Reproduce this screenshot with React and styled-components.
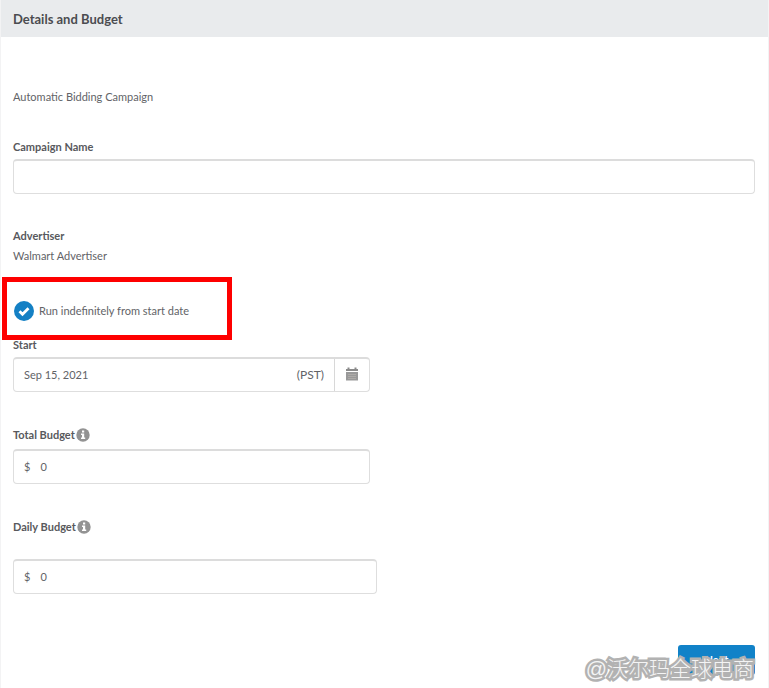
import React from "react";
import styled, { createGlobalStyle } from "styled-components";

const GlobalStyle = createGlobalStyle`
  *, *::before, *::after { box-sizing: border-box; }
  body {
    margin: 0;
    background: #fff;
    color: #626367;
    font-family: Lato, "Noto Sans CJK SC", sans-serif;
    font-size: 11px;
    line-height: 16px;
  }
  input, button { font: inherit; color: inherit; }
`;

const Panel = styled.main`
  border: solid #f3f3f4;
  border-width: 0 1px;
  min-height: 100vh;
`;

const Header = styled.header`
  padding: 9px 12px 8px;
  background: #e9ebed;
`;

const Title = styled.h1`
  margin: 0;
  font-size: 13px;
  line-height: 20px;
  font-weight: 700;
  color: #4b4c50;
`;

const Form = styled.form`
  display: flex;
  flex-direction: column;
  align-items: flex-start;
  padding: 52px 13px 0 12px;
`;

const Note = styled.p`
  margin: 0;
`;

const Field = styled.div`
  display: flex;
  flex-direction: column;
  gap: ${(p) => p.$gap || 4}px;
  width: 100%;
  max-width: ${(p) => p.$max || "none"};
  margin-top: ${(p) => p.$top || 0}px;
`;

const LabelRow = styled.div`
  display: flex;
  align-items: center;
  gap: 1px;
`;

const Label = styled.label`
  font-weight: 700;
  color: #58595d;
`;

const Box = styled.div`
  display: flex;
  align-items: stretch;
  height: 35px;
  border: 1px solid #dedede;
  border-top: 2px solid #dcdcdc;
  border-radius: 4px;
  background: #fff;
`;

const Input = styled.input`
  flex: 1;
  min-width: 0;
  border: 0;
  outline: 0;
  padding: 0 10px;
  background: transparent;
`;

const Prefix = styled.span`
  align-self: center;
  padding-left: 10px;
`;

const Suffix = styled.span`
  align-self: center;
  padding-right: 10px;
  font-size: 12px;
`;

const CalendarButton = styled.button`
  display: grid;
  place-items: center;
  width: 35px;
  padding: 0 0 2px;
  border: 0;
  border-left: 1px solid #d8d8d8;
  background: transparent;
`;

const Highlight = styled.div`
  display: flex;
  align-items: center;
  width: 230px;
  height: 63px;
  margin: 13px 0 0 -11px;
  padding: 4px 0 0 7px;
  border: 5px solid #fe0000;
`;

const CheckLabel = styled.label`
  display: flex;
  align-items: center;
  gap: 5px;
`;

const Check = styled.input`
  appearance: none;
  position: absolute;
  width: 20px;
  height: 20px;
  margin: 0;
`;

const InfoButton = styled.button`
  display: flex;
  padding: 0;
  border: 0;
  background: transparent;
`;

const Footer = styled.footer`
  position: relative;
  display: flex;
  justify-content: flex-end;
  width: 100%;
  margin-top: 51px;
`;

const NextButton = styled.button`
  width: 77px;
  height: 30px;
  padding: 0;
  border: 0;
  border-radius: 3px;
  background: #1182c8;
  color: #fff;
  font-weight: 700;
`;

const Watermark = styled.span`
  position: absolute;
  right: 1px;
  top: 9px;
  font-family: "Liberation Sans", "Noto Sans CJK SC", sans-serif;
  font-size: 21px;
  font-weight: 300;
  line-height: 30px;
  white-space: nowrap;
  color: #f4f4f4;
  paint-order: stroke fill;
  -webkit-text-stroke: 5px #b2b2b2;
  pointer-events: none;
`;

function CheckIcon() {
  return (
    <svg width="20" height="20" viewBox="0 0 20 20" aria-hidden="true">
      <circle cx="10" cy="10" r="10" fill="#1480c4" />
      <path d="M5.5 10.2l3 3 6-6" fill="none" stroke="#fff" strokeWidth="2.8" />
    </svg>
  );
}

function InfoIcon() {
  return (
    <svg width="14" height="14" viewBox="0 0 14 14" aria-hidden="true">
      <circle cx="7" cy="7" r="6.7" fill="#939393" />
      <path d="M6 2.5h2.2v2H6zM5 5.6h3.2v3.8h1V11H5V9.4h1V7.1H5z" fill="#fff" />
    </svg>
  );
}

function CalendarIcon() {
  return (
    <svg width="14" height="14" viewBox="0 0 14 14" aria-hidden="true">
      <path d="M1 2h1.5V.5h2V2h5V.5h2V2H13v2H1z" fill="#8b8b8b" />
      <path d="M1 5h12v8.5H1z" fill="#999" />
      <path d="M3 7.5h8M3 9.5h8M3 11.5h8" stroke="#b4b0ac" strokeWidth=".8" />
    </svg>
  );
}

function BudgetField({ id, label, gap, max, top }) {
  return (
    <Field $gap={gap} $max={max} $top={top}>
      <LabelRow>
        <Label htmlFor={id}>{label}</Label>
        <InfoButton type="button" aria-label={`About ${label}`}>
          <InfoIcon />
        </InfoButton>
      </LabelRow>
      <Box>
        <Prefix>$</Prefix>
        <Input id={id} defaultValue="0" />
      </Box>
    </Field>
  );
}

export default function App() {
  return (
    <>
      <GlobalStyle />
      <Panel>
        <Header>
          <Title>Details and Budget</Title>
        </Header>
        <Form>
          <Note>Automatic Bidding Campaign</Note>
          <Field $top={34}>
            <Label htmlFor="name">Campaign Name</Label>
            <Box>
              <Input id="name" />
            </Box>
          </Field>
          <Field $top={34}>
            <Label as="strong">Advertiser</Label>
            <Note>Walmart Advertiser</Note>
          </Field>
          <Highlight>
            <CheckLabel>
              <Check type="checkbox" defaultChecked />
              <CheckIcon />
              Run indefinitely from start date
            </CheckLabel>
          </Highlight>
          <Field $max="357px" $top={-3}>
            <Label htmlFor="start">Start</Label>
            <Box>
              <Input id="start" defaultValue="Sep 15, 2021" />
              <Suffix>(PST)</Suffix>
              <CalendarButton type="button" aria-label="Choose start date">
                <CalendarIcon />
              </CalendarButton>
            </Box>
          </Field>
          <BudgetField id="total" label="Total Budget" gap={6} max="357px" top={35} />
          <BudgetField id="daily" label="Daily Budget" gap={24} max="364px" top={35} />
          <Footer>
            <NextButton type="button">Next</NextButton>
            <Watermark>@沃尔玛全球电商</Watermark>
          </Footer>
        </Form>
      </Panel>
    </>
  );
}
